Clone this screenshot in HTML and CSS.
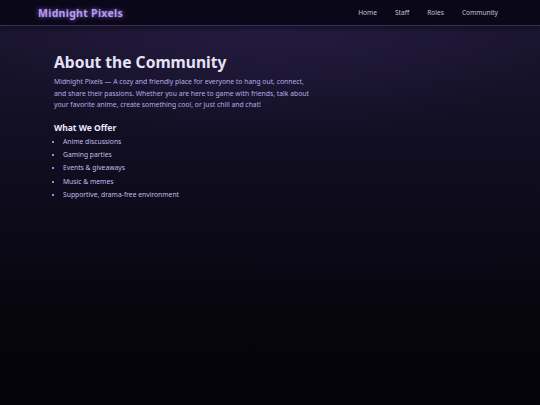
FILE: index.html
```html
<!DOCTYPE html>
<html lang="en">
<head>
<meta charset="utf-8">
<title>Midnight Pixels</title>
<link rel="stylesheet" href="styles.css">
</head>
<body>
<header class="site-header">
  <div class="logo">Midnight Pixels</div>
  <nav class="nav">
    <a href="#">Home</a>
    <a href="#">Staff</a>
    <a href="#">Roles</a>
    <a href="#">Community</a>
  </nav>
</header>
<main class="content">
  <h1 class="title">About the Community</h1>
  <p class="intro">Midnight Pixels — A cozy and friendly place for everyone to hang out, connect, and share their passions. Whether you are here to game with friends, talk about your favorite anime, create something cool, or just chill and chat!</p>
  <h2 class="subtitle">What We Offer</h2>
  <ul class="offers">
    <li>Anime discussions</li>
    <li>Gaming parties</li>
    <li>Events &amp; giveaways</li>
    <li>Music &amp; memes</li>
    <li>Supportive, drama-free environment</li>
  </ul>
</main>
</body>
</html>
```
FILE: styles.css
```css
html, body {
  margin: 0;
  padding: 0;
  height: 100%;
}
body {
  font-family: "Noto Sans", "Open Sans", sans-serif;
  background:
    radial-gradient(ellipse 60% 35% at 50% 0%, rgba(60, 45, 110, 0.35), rgba(60, 45, 110, 0) 100%),
    linear-gradient(180deg, #1c1631 0%, #110e22 35%, #07060f 75%, #04030a 100%);
  color: #c6c0e6;
  min-height: 405px;
}
.site-header {
  height: 25px;
  background: #0a0818;
  border-bottom: 1px solid #3a2d60;
  display: flex;
  align-items: center;
  justify-content: space-between;
  padding: 0 42px 0 38px;
  box-shadow: 0 2px 6px rgba(0, 0, 0, 0.5);
}
.logo {
  font-weight: 700;
  font-size: 10.5px;
  color: #b79cf0;
  letter-spacing: 0.3px;
  text-shadow: 0 0 4px rgba(170, 130, 255, 0.8);
}
.nav {
  display: flex;
  gap: 18px;
}
.nav a {
  color: #c4c0d8;
  text-decoration: none;
  font-size: 6.6px;
}
.content {
  padding: 26px 54px 0 54px;
}
.title {
  margin: 0;
  font-size: 15.6px;
  font-weight: 700;
  color: #e6e2f6;
  line-height: 20px;
}
.intro {
  margin: 4px 0 0 0;
  max-width: 256px;
  font-size: 6.8px;
  line-height: 11.5px;
  color: #b6aee0;
}
.subtitle {
  margin: 11px 0 0 0;
  font-size: 8.5px;
  font-weight: 700;
  color: #ece8fa;
  line-height: 12px;
}
.offers {
  margin: 1px 0 0 0;
  padding-left: 9px;
  font-size: 6.75px;
  line-height: 13.4px;
  color: #c2bde6;
}
```
